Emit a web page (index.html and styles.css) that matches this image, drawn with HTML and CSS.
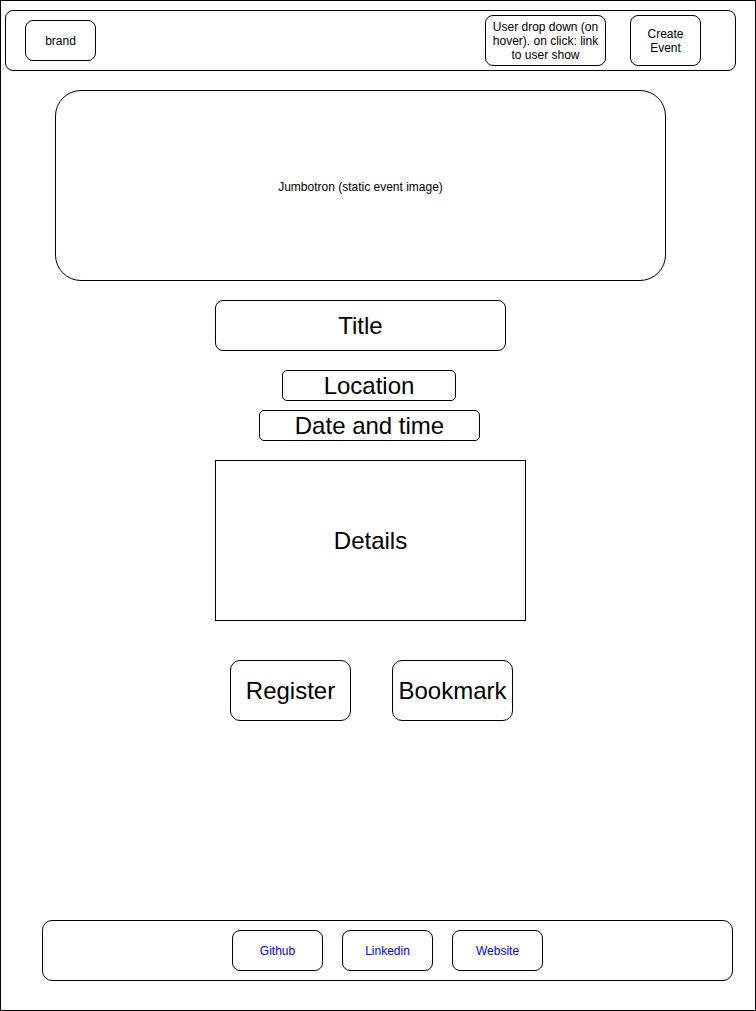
FILE: index.html
```html
<!DOCTYPE html>
<html>
<head>
<meta charset="utf-8">
<title>Event show wireframe</title>
<link rel="stylesheet" href="styles.css">
</head>
<body>
<div class="frame">
  <header class="navbar">
    <div class="box brand">brand</div>
    <div class="box user-menu">User drop down (on<br>hover). on click: link<br>to user show</div>
    <div class="box create">Create<br>Event</div>
  </header>

  <section class="jumbotron">Jumbotron (static event image)</section>

  <div class="box big title">Title</div>
  <div class="box big location">Location</div>
  <div class="box big datetime">Date and time</div>
  <div class="big details">Details</div>

  <div class="actions">
    <div class="box big action">Register</div>
    <div class="box big action">Bookmark</div>
  </div>

  <footer class="footer">
    <a class="box link">Github</a>
    <a class="box link">Linkedin</a>
    <a class="box link">Website</a>
  </footer>
</div>
</body>
</html>
```

FILE: styles.css
```css
html, body {
  margin: 0;
  padding: 0;
  background: #fff;
}

.frame {
  box-sizing: border-box;
  width: 756px;
  height: 1011px;
  border: 1px solid #000;
  font-family: "Liberation Sans", Arial, Helvetica, sans-serif;
  color: #000;
  font-size: 12px;
  display: flex;
  flex-direction: column;
  align-items: flex-start;
  overflow: hidden;
}

.box {
  box-sizing: border-box;
  border: 1px solid #000;
  border-radius: 8px;
  display: flex;
  align-items: center;
  justify-content: center;
  text-align: center;
  line-height: 14px;
}

.navbar {
  box-sizing: border-box;
  margin: 9px 0 0 4px;
  width: 731px;
  height: 61px;
  border: 1px solid #000;
  border-radius: 8px;
  display: flex;
  align-items: center;
}

.brand {
  width: 71px;
  height: 41px;
  margin-left: 19px;
}

.user-menu {
  width: 121px;
  height: 51px;
  margin-left: auto;
}

.create {
  width: 71px;
  height: 51px;
  margin-left: 24px;
  margin-right: 34px;
}

.jumbotron {
  box-sizing: border-box;
  margin: 19px 0 0 54px;
  width: 611px;
  height: 191px;
  border: 1px solid #000;
  border-radius: 26px;
  display: flex;
  align-items: center;
  justify-content: center;
  padding-top: 2px;
}

.big {
  font-size: 24px;
  line-height: 28px;
}

.title {
  margin: 19px 0 0 214px;
  width: 291px;
  height: 51px;
}

.location {
  margin: 19px 0 0 281px;
  width: 174px;
  height: 31px;
  border-radius: 5px;
}

.datetime {
  margin: 9px 0 0 258px;
  width: 221px;
  height: 31px;
  border-radius: 5px;
}

.details {
  box-sizing: border-box;
  margin: 19px 0 0 214px;
  width: 311px;
  height: 161px;
  border: 1px solid #000;
  display: flex;
  align-items: center;
  justify-content: center;
}

.actions {
  margin: 39px 0 0 229px;
  display: flex;
  gap: 41px;
}

.action {
  width: 121px;
  height: 61px;
  border-radius: 10px;
}

.footer {
  box-sizing: border-box;
  margin: 199px 0 0 41px;
  width: 691px;
  height: 61px;
  border: 1px solid #000;
  border-radius: 10px;
  display: flex;
  align-items: center;
  justify-content: center;
  gap: 19px;
}

.link {
  width: 91px;
  height: 41px;
  color: #0000ff;
  text-decoration: none;
}
```
